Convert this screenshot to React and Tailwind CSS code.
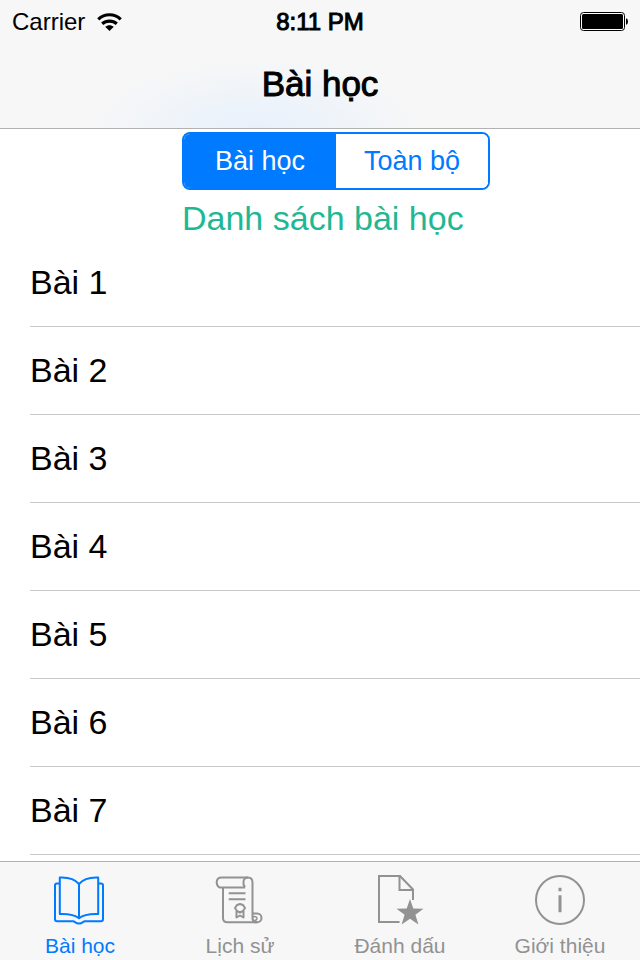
import { useState } from 'react';

const lessons = ['Bài 1', 'Bài 2', 'Bài 3', 'Bài 4', 'Bài 5', 'Bài 6', 'Bài 7'];
const segments = ['Bài học', 'Toàn bộ'];

const WifiIcon = () => (
  <svg width="25" height="18" viewBox="0 0 25 18" fill="none" stroke="black" strokeWidth="3.2" aria-hidden="true">
    <path d="M1.3 6.3 C7.5 0.2 17.5 0.2 23.7 6.3" />
    <path d="M5.2 10.8 C9.3 7.1 15.7 7.1 19.8 10.8" />
    <path d="M8.2 13.8 C10.8 11.6 14.2 11.6 16.8 13.8 L12.5 18 Z" fill="black" stroke="none" />
  </svg>
);

const BatteryIcon = () => (
  <svg width="49" height="20" viewBox="0 0 49 20" aria-hidden="true">
    <rect x="1.5" y="0.5" width="44" height="18" rx="3" fill="white" stroke="black" />
    <rect x="3" y="2" width="41" height="15" rx="1.5" />
    <path d="M47 6.2 Q49 6.6 49 9.5 Q49 12.4 47 12.8 Z" />
  </svg>
);

const BookIcon = () => (
  <svg width="52" height="52" viewBox="0 0 52 52" fill="none" stroke="currentColor" strokeWidth="2" strokeLinejoin="round" aria-hidden="true">
    <path d="M5.5 9.5 H3 Q1 9.5 1 11.5 V45 Q1 47.3 3 47.3 H19 C21.5 47.3 21 49.6 25 49.6 C29 49.6 28.5 47.3 31 47.3 H47 Q49 47.3 49 45 V11.5 Q49 9.5 47 9.5 H44.5" />
    <path d="M25 10 C20 4 12 3.2 5.8 3.5 V40 C12 39.8 20 40 25 44.3 C30 40 38 39.8 44.2 40 V3.5 C38 3.2 30 4 25 10 V44.3" />
  </svg>
);

const ScrollIcon = () => (
  <svg width="52" height="52" viewBox="0 0 52 52" fill="none" stroke="currentColor" strokeWidth="2" strokeLinejoin="round" aria-hidden="true">
    <path d="M31 13.5 H5.5 C1.5 11 1.5 3.5 7.5 3.5 H34 C37 3.5 38.5 5.5 38.5 8.5 V44 C38.5 47 40 48.3 43 48.3 H13.5 Q9 48.3 9 44 V13.5" />
    <path d="M34 3.5 C28.5 3.5 28.5 10.5 31 13.5" />
    <path d="M38.5 39.5 H43 C49 39.5 49 48.3 43 48.3 H40" />
    <path d="M38.5 43.5 C40.5 42 43 42.5 43 44.5 C43 46 41.5 46.5 40.5 46" strokeWidth="1.5" />
    <path d="M14.7 19.2 H31.5 M14.7 25.2 H31.5" />
    <path d="M26 30 L29 31 L31 34 L29 37 L26 38.5 L23 37 L21 34 L23 31 Z" />
    <path d="M22.5 37 V43.5 L26 41.5 L29.5 43.5 V37" />
  </svg>
);

const BookmarkIcon = () => (
  <svg width="52" height="52" viewBox="0 0 52 52" fill="none" stroke="currentColor" strokeWidth="2" aria-hidden="true">
    <path d="M25.5 48 H5 V2 H26 L39 15.5 V26" />
    <path d="M25.5 2 V16 H39" />
    <path
      d="M36 25 L39.3 34.5 L49.5 34.7 L41.4 40.8 L44.4 50.5 L36 44.7 L27.6 50.5 L30.6 40.8 L22.5 34.7 L32.7 34.5 Z"
      fill="currentColor"
      stroke="none"
    />
  </svg>
);

const InfoIcon = () => (
  <svg width="52" height="52" viewBox="0 0 52 52" fill="none" stroke="currentColor" strokeWidth="2" aria-hidden="true">
    <circle cx="26" cy="26" r="24" />
    <path d="M26 21.3 V38.3 M26 13.8 V17.2" strokeWidth="3" />
  </svg>
);

const tabs = [
  { label: 'Bài học', Icon: BookIcon },
  { label: 'Lịch sử', Icon: ScrollIcon },
  { label: 'Đánh dấu', Icon: BookmarkIcon },
  { label: 'Giới thiệu', Icon: InfoIcon },
];

const App = () => {
  const [segment, setSegment] = useState('Bài học');
  const [activeTab, setActiveTab] = useState('Bài học');

  return (
    <div className="flex h-screen flex-col bg-white font-['Liberation_Sans',Arial,sans-serif] text-black">
      <header className="shrink-0 border-b border-[#b2b2b2] bg-[#f7f7f7] bg-[radial-gradient(170px_70px_at_40%_100%,#e8f1fc,#f7f7f7)]">
        {/* Status bar */}
        <div className="grid h-10 grid-cols-3 items-center px-3 pt-1 text-2xl leading-9">
          <div className="flex items-center gap-3">
            <span>Carrier</span>
            <WifiIcon />
          </div>
          <span className="text-center [-webkit-text-stroke:1px_black]">8:11 PM</span>
          <div className="flex justify-end">
            <BatteryIcon />
          </div>
        </div>
        <h1 className="flex h-22 items-center justify-center text-[35px] [-webkit-text-stroke:1px_black]">Bài học</h1>
      </header>

      <main className="min-h-0 flex-1 overflow-hidden">
        <div className="flex justify-center pl-8 pt-[3px]">
          <div className="w-[308px]">
            <div className="grid h-[58px] grid-cols-2 overflow-hidden rounded-lg border-2 border-[#007aff]">
              {segments.map((name) => (
                <button
                  key={name}
                  type="button"
                  onClick={() => setSegment(name)}
                  className={segment === name ? 'bg-[#007aff] text-[27px] text-white' : 'bg-white text-[27px] text-[#007aff]'}
                >
                  {name}
                </button>
              ))}
            </div>
            <h2 className="h-[49px] whitespace-nowrap text-[34px] leading-14 text-[#1fb893]">Danh sách bài học</h2>
          </div>
        </div>

        <ul className="pl-[30px]">
          {lessons.map((lesson) => (
            <li key={lesson} className="flex h-22 items-center border-b border-[#c8c7cc] text-[34px]">
              {lesson}
            </li>
          ))}
        </ul>
      </main>

      <nav className="grid shrink-0 grid-cols-4 border-t border-[#b2b2b2] bg-[#f7f7f7] pt-3">
        {tabs.map(({ label, Icon }) => (
          <button
            key={label}
            type="button"
            onClick={() => setActiveTab(label)}
            className={
              activeTab === label
                ? 'flex flex-col items-center gap-2 text-[21px] text-[#007aff]'
                : 'flex flex-col items-center gap-2 text-[21px] text-[#929292]'
            }
          >
            <Icon />
            <span className="pb-0.5 leading-6">{label}</span>
          </button>
        ))}
      </nav>
    </div>
  );
};

export default App;
